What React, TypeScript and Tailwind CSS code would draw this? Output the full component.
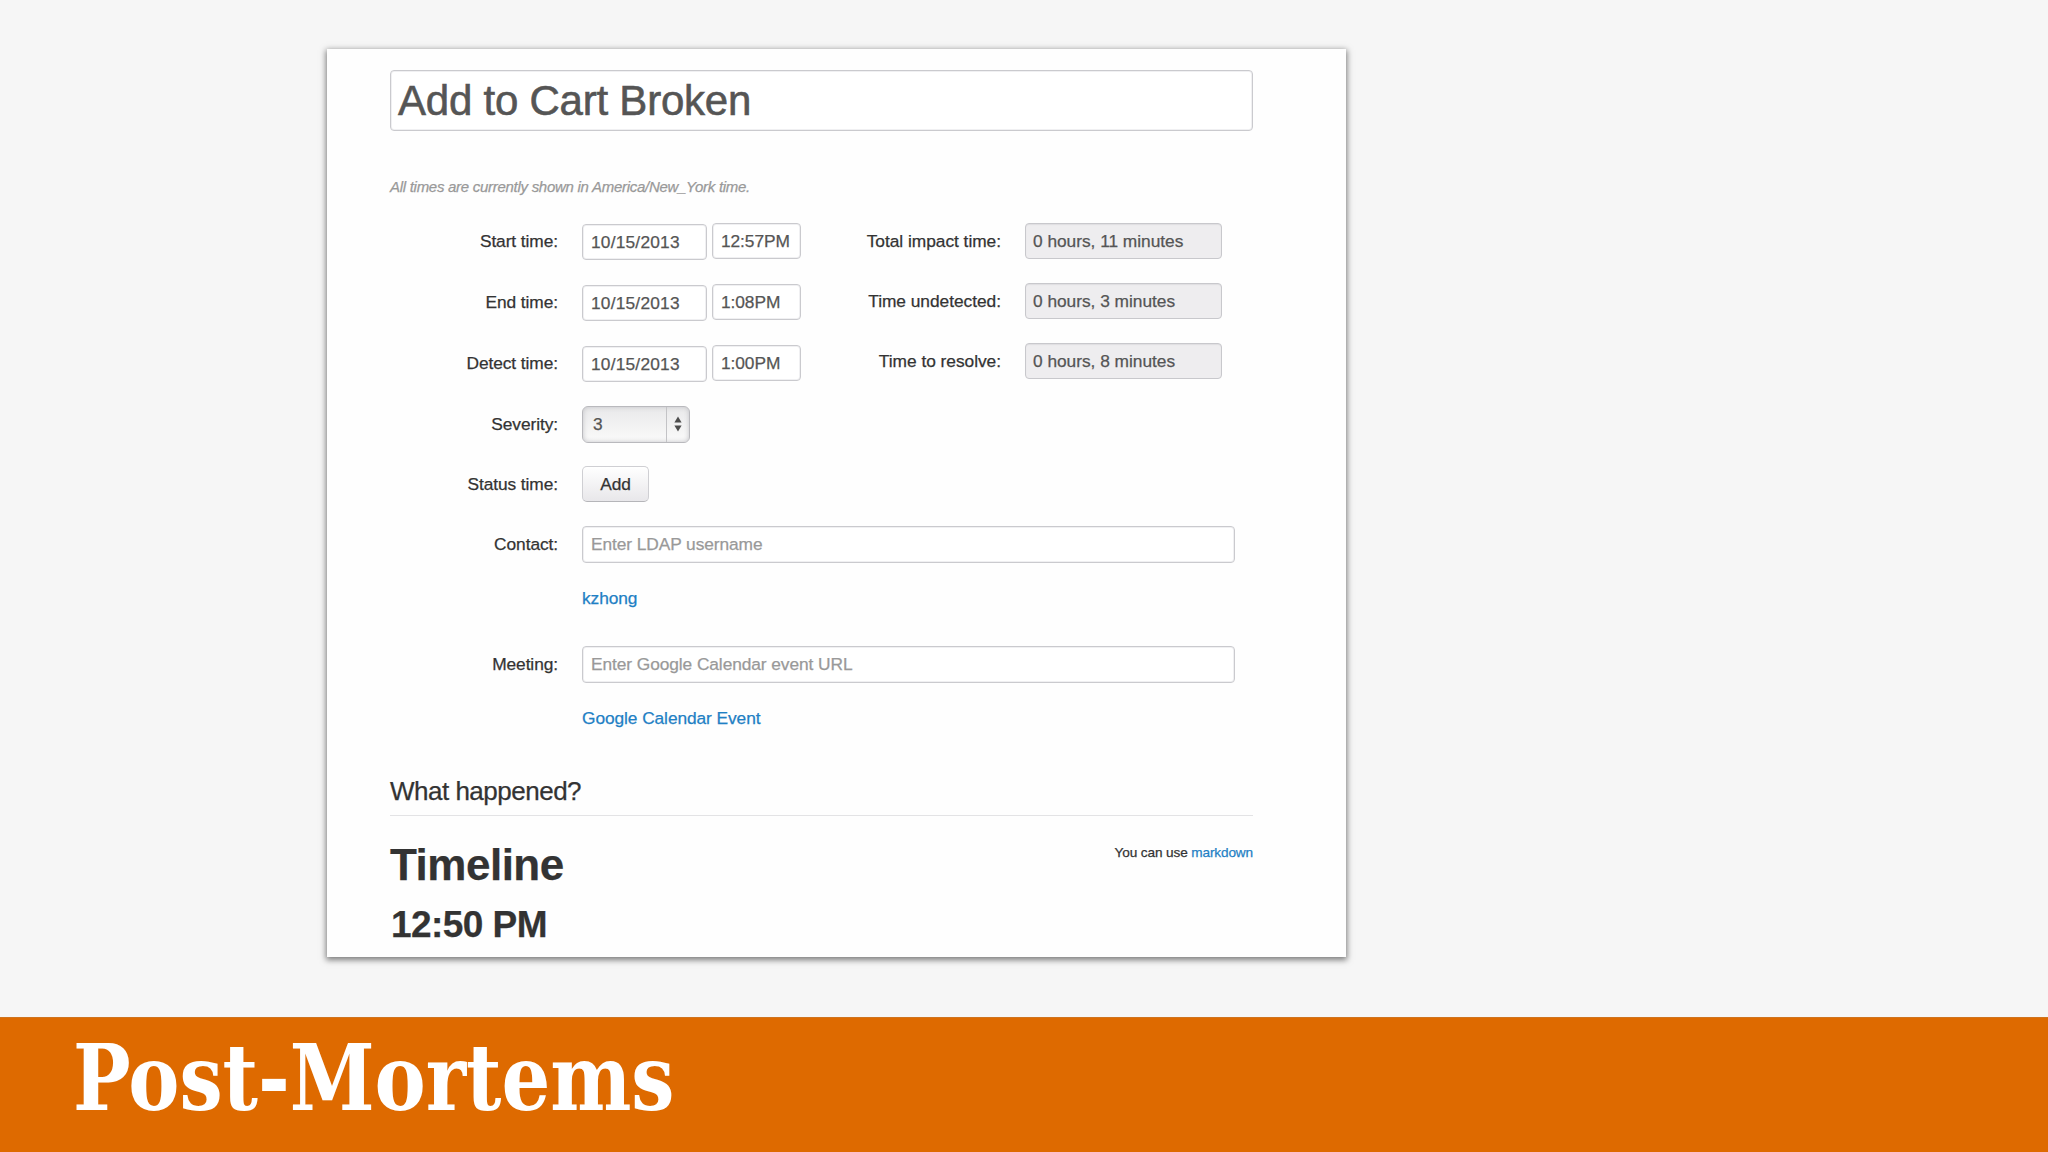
import type { ReactNode } from 'react';

const times = [
  { label: 'Start time:', date: '10/15/2013', time: '12:57PM' },
  { label: 'End time:', date: '10/15/2013', time: '1:08PM' },
  { label: 'Detect time:', date: '10/15/2013', time: '1:00PM' },
];

const durations = [
  { label: 'Total impact time:', value: '0 hours, 11 minutes' },
  { label: 'Time undetected:', value: '0 hours, 3 minutes' },
  { label: 'Time to resolve:', value: '0 hours, 8 minutes' },
];

const field =
  'flex items-center rounded-[4px] border border-[#cacace] bg-white pl-[8px] text-[#555] shadow-[inset_0_0_0_1px_#f0f0f2]';

function Row({ label, children }: { label: string; children: ReactNode }) {
  return (
    <div className="flex h-9 items-center gap-6">
      <label className="w-[168px] text-right">{label}</label>
      {children}
    </div>
  );
}

export default function App() {
  return (
    <div className="flex h-[1152px] w-[2048px] flex-col overflow-hidden bg-[#f6f6f6] pt-[49px] font-['Liberation_Sans',Arial,sans-serif] text-[17.33px] leading-6 tracking-[-0.08px] text-[#333]">
      <main className="ml-[327px] h-[908px] w-[1019px] shrink-0 bg-[#fefefe] pt-[21px] pr-[93px] pl-[63px] shadow-[0_2px_6px_1px_rgba(0,0,0,0.5)] [-webkit-text-stroke:0.25px]">
        <h1 className="flex h-[61px] items-center rounded-[4px] border border-[#cacace] bg-white px-[7px] text-[42px] tracking-[-0.23px] text-[#555] shadow-[inset_0_0_0_1px_#f0f0f2] [-webkit-text-stroke:0.6px]">
          Add to Cart Broken
        </h1>

        <p className="mt-[44px] text-[15px] tracking-[-0.28px] text-[#999] italic">
          All times are currently shown in America/New_York time.
        </p>

        <div className="mt-[24px] flex">
          <div className="flex w-[411px] flex-col gap-[25px]">
            {times.map((item) => (
              <Row key={item.label} label={item.label}>
                <div className="flex gap-[5px]">
                  <span className={`${field} mt-px h-9 w-[125px] tracking-[0.2px]`}>
                    {item.date}
                  </span>
                  <span className={`${field} h-9 w-[89px]`}>{item.time}</span>
                </div>
              </Row>
            ))}
          </div>

          <div className="flex flex-col gap-6 tracking-[-0.03px]">
            {durations.map((item) => (
              <div key={item.label} className="flex h-9 items-center gap-6">
                <label className="w-[200px] text-right">{item.label}</label>
                <span className="flex h-9 w-[197px] items-center rounded-[4px] border border-[#c8c8cc] bg-[#eeedef] px-[7px] text-[#555] shadow-[inset_0_1px_1px_#dedde0]">
                  {item.value}
                </span>
              </div>
            ))}
          </div>
        </div>

        <div className="mt-[25px] flex flex-col gap-6">
          <Row label="Severity:">
            <div className="flex h-[37px] w-[108px] shrink-0 overflow-hidden rounded-[6px] border border-[#b9b9bd] bg-linear-to-b from-[#e9e9ea] to-[#fafafa] text-[#555] shadow-[inset_0_0_5px_#c4c4c8]">
              <span className="flex flex-1 items-center pl-[10px]">3</span>
              <span className="flex w-[23px] items-center justify-center border-l border-[#c3c3c6]">
                <svg width="8" height="16" viewBox="0 0 8 16" fill="#4d4d4d">
                  <path d="M4 0.5L7.6 6.5H0.4Z" />
                  <path d="M4 15.5L0.4 9.5H7.6Z" />
                </svg>
              </span>
            </div>
          </Row>
          <Row label="Status time:">
            <button className="h-9 w-[67px] rounded-[5px] border border-[#cfcfd3] border-b-[#b5b5b9] bg-linear-to-b from-white to-[#e8e7ea]">
              Add
            </button>
          </Row>
          <Row label="Contact:">
            <span className={`${field} h-[37px] w-[653px] text-[#999]`}>
              Enter LDAP username
            </span>
          </Row>
        </div>
        <a className="mt-[24px] ml-48 block text-[#1f80c4]">kzhong</a>

        <div className="mt-[36px]">
          <Row label="Meeting:">
            <span className={`${field} h-[37px] w-[653px] text-[#999]`}>
              Enter Google Calendar event URL
            </span>
          </Row>
        </div>
        <a className="mt-[24px] ml-48 block text-[#1f80c4]">
          Google Calendar Event
        </a>

        <h2 className="mt-[45px] h-[41px] border-b border-[#e3e3e5] text-[26px] leading-8 tracking-[-0.5px]">
          What happened?
        </h2>

        <div className="flex items-start justify-between pt-[24px]">
          <div className="font-bold">
            <h3 className="text-[44px] leading-[50px] tracking-[-0.5px]">Timeline</h3>
            <h4 className="mt-[13px] pl-px text-[37px] leading-[44px] tracking-[-0.55px]">
              12:50 PM
            </h4>
          </div>
          <p className="pt-px text-[13.6px] tracking-[-0.12px]">
            You can use <a className="text-[#1f80c4]">markdown</a>
          </p>
        </div>
      </main>

      <footer className="mt-[60px] flex flex-1 items-start border-t border-[#cf7420] bg-[#de6a00] pl-[73px]">
        <h1 className="origin-left scale-x-[0.927] pt-[7px] font-['DejaVu_Serif_Condensed','DejaVu_Serif',serif] text-[92px] leading-[106px] font-bold whitespace-nowrap text-white">
          Post-Mortems
        </h1>
      </footer>
    </div>
  );
}
